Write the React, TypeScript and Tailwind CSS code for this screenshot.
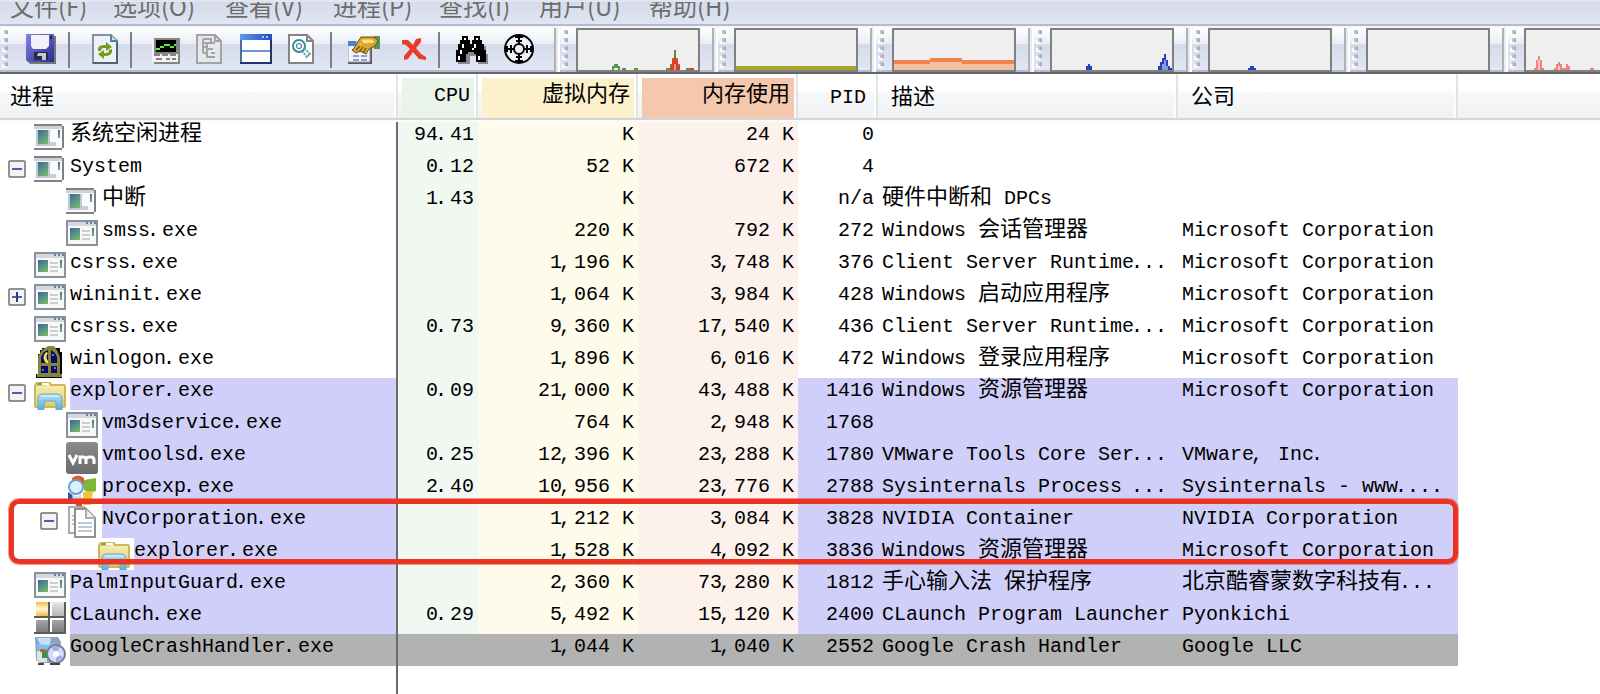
import React from "react";

type IconKind =
  | "sys" | "app" | "winlogon" | "folder" | "vm" | "procexp" | "docs" | "claunch" | "installer";

interface Proc {
  name: string;
  depth: 0 | 1 | 2;
  icon: IconKind;
  toggle?: "+" | "-";
  cpu?: string;
  virt: string;
  mem: string;
  pid: string;
  desc?: string;
  company?: string;
  tone?: "own" | "gone";
}

const MS = "Microsoft Corporation";

const PROCS: Proc[] = [
  { name: "系统空闲进程", depth: 0, icon: "sys", cpu: "94.41", virt: "K", mem: "24 K", pid: "0" },
  { name: "System", depth: 0, icon: "sys", toggle: "-", cpu: "0.12", virt: "52 K", mem: "672 K", pid: "4" },
  { name: "中断", depth: 1, icon: "sys", cpu: "1.43", virt: "K", mem: "K", pid: "n/a", desc: "硬件中断和 DPCs" },
  { name: "smss.exe", depth: 1, icon: "app", virt: "220 K", mem: "792 K", pid: "272", desc: "Windows 会话管理器", company: MS },
  { name: "csrss.exe", depth: 0, icon: "app", virt: "1,196 K", mem: "3,748 K", pid: "376", desc: "Client Server Runtime...", company: MS },
  { name: "wininit.exe", depth: 0, icon: "app", toggle: "+", virt: "1,064 K", mem: "3,984 K", pid: "428", desc: "Windows 启动应用程序", company: MS },
  { name: "csrss.exe", depth: 0, icon: "app", cpu: "0.73", virt: "9,360 K", mem: "17,540 K", pid: "436", desc: "Client Server Runtime...", company: MS },
  { name: "winlogon.exe", depth: 0, icon: "winlogon", virt: "1,896 K", mem: "6,016 K", pid: "472", desc: "Windows 登录应用程序", company: MS },
  { name: "explorer.exe", depth: 0, icon: "folder", toggle: "-", cpu: "0.09", virt: "21,000 K", mem: "43,488 K", pid: "1416", desc: "Windows 资源管理器", company: MS, tone: "own" },
  { name: "vm3dservice.exe", depth: 1, icon: "app", virt: "764 K", mem: "2,948 K", pid: "1768", tone: "own" },
  { name: "vmtoolsd.exe", depth: 1, icon: "vm", cpu: "0.25", virt: "12,396 K", mem: "23,288 K", pid: "1780", desc: "VMware Tools Core Ser...", company: "VMware, Inc.", tone: "own" },
  { name: "procexp.exe", depth: 1, icon: "procexp", cpu: "2.40", virt: "10,956 K", mem: "23,776 K", pid: "2788", desc: "Sysinternals Process ...", company: "Sysinternals - www....", tone: "own" },
  { name: "NvCorporation.exe", depth: 1, icon: "docs", toggle: "-", virt: "1,212 K", mem: "3,084 K", pid: "3828", desc: "NVIDIA Container", company: "NVIDIA Corporation", tone: "own" },
  { name: "explorer.exe", depth: 2, icon: "folder", virt: "1,528 K", mem: "4,092 K", pid: "3836", desc: "Windows 资源管理器", company: MS, tone: "own" },
  { name: "PalmInputGuard.exe", depth: 0, icon: "app", virt: "2,360 K", mem: "73,280 K", pid: "1812", desc: "手心输入法 保护程序", company: "北京酷睿蒙数字科技有...", tone: "own" },
  { name: "CLaunch.exe", depth: 0, icon: "claunch", cpu: "0.29", virt: "5,492 K", mem: "15,120 K", pid: "2400", desc: "CLaunch Program Launcher", company: "Pyonkichi", tone: "own" },
  { name: "GoogleCrashHandler.exe", depth: 0, icon: "installer", virt: "1,044 K", mem: "1,040 K", pid: "2552", desc: "Google Crash Handler", company: "Google LLC", tone: "gone" },
];

const MENUS = [
  { label: "文件(F)", width: "w-[103px]" },
  { label: "选项(O)", width: "w-[112px]" },
  { label: "查看(V)", width: "w-[108px]" },
  { label: "进程(P)", width: "w-[106px]" },
  { label: "查找(I)", width: "w-[100px]" },
  { label: "用户(U)", width: "w-[110px]" },
  { label: "帮助(H)", width: "w-[110px]" },
];

/* Full-width characters are set slightly larger; punctuation hugs the left of its cell. */
function Mono({ text }: { text: string }) {
  const parts = text.match(/[\u4e00-\u9fff]+|[.,]+|[^\u4e00-\u9fff.,]+/g) ?? [];
  return (
    <>
      {parts.map((p, i) =>
        /[\u4e00-\u9fff]/.test(p) ? (
          <span key={i} className="text-[22px] leading-[0]">{p}</span>
        ) : /[.,]/.test(p) ? (
          <span key={i} className="relative -left-[3px]">{p}</span>
        ) : (
          <span key={i}>{p}</span>
        )
      )}
    </>
  );
}

function ProcIcon({ kind }: { kind: IconKind }) {
  const body = {
    sys: (
      <g>
        <path d="M0 2H30V28H0z" fill="#fafafa" />
        <path d="M0 4H28V7H0z" fill="#d0d1d6" />
        <path d="M0 2H28V4H0zM0 26H28V28H0zM28 4H30V26H28z" fill="#808086" />
        <path d="M2 8H16V24H2z" fill="#c3c4d6" />
        <path d="M4 8H14V22H4z" fill="url(#scr)" />
        <path d="M24 8H26V16H24z" fill="url(#scr)" />
        <path d="M16 20H22V24H16z" fill="#cfcfcf" />
      </g>
    ),
    app: (
      <g>
        <path d="M0 2H32V28H0z" fill="#8b9297" />
        <path d="M2 4H30V26H2z" fill="#f8f8f8" />
        <path d="M2 4H30V8H2z" fill="#d2dae1" />
        <path d="M20 4h2v2h-2zM24 4h2v2h-2zM28 4h2v2h-2z" fill="#6a7da0" />
        <path d="M4 10H14V22H4z" fill="url(#scr)" />
        <path d="M26 10H28V18H26z" fill="url(#scr)" />
        <path d="M16 12h8v2h-8zM16 16h8v2h-8zM16 20h8v2h-8z" fill="#cdcdcd" />
      </g>
    ),
    winlogon: (
      <g>
        <path d="M8 2H26V6H28V28H28V32H2V28H4V8H6V4H8z" fill="#060606" />
        <path d="M4 28V10L8 4L14 0H20L24 6L26 12V28H28V31H3V28z" fill="#85843a" />
        <path d="M7 11L10 6L14 4V17H7zM17 4L21 7L23 11V17H17zM7 20H14V27H7zM17 20H23V27H17z" fill="#060a70" />
        <path d="M12 6Q7 12 12 17H14V15Q11 11 14 7z" fill="#f3e83d" />
        <path d="M14 3H17V29H14zM4 17H26V20H4z" fill="#85843a" />
        <path d="M18 8h2v2h-2zM20 21h2v2h-2zM8 23h2v2h-2z" fill="#6e75cb" />
      </g>
    ),
    folder: (
      <g>
        <path d="M1 6Q1 4 3 4H16L18 6H30Q32 6 32 9V28Q32 30 30 30H2Q0 30 0 27V8z" fill="#cdb757" />
        <path d="M2 8L16 7L17 8H30V28H2z" fill="url(#fold)" />
        <path d="M8 5H15V7H8z" fill="#fff" /><path d="M4 5H8V7H4z" fill="#55b940" />
        <path d="M4 32V21Q4 16 9 16H23Q28 16 28 21V32H22V25Q22 23 20 23H12Q10 23 10 25V32z" fill="url(#blue)" stroke="#6aa6c9" strokeWidth="1" />
        <path d="M7 18H25" stroke="#cdeffc" strokeWidth="1.6" />
      </g>
    ),
    vm: (
      <g>
        <rect x="0" y="0" width="32" height="32" rx="3" fill="url(#vmg)" />
        <path d="M3 13L7 21L11 13M14 22V15H17Q20 15 20 18V22M20 18Q20 15 23 15H25Q28 15 28 18V22" fill="none" stroke="#fff" strokeWidth="3" />
      </g>
    ),
    procexp: (
      <g>
        <path d="M6 4Q12-1 18 4V11H6z" fill="#e4592c" />
        <path d="M18 6L30 4V17Q23 20 18 16z" fill="#7fb637" />
        <path d="M17 18L27 17L25 31H17z" fill="#f3c437" />
        <path d="M2 18L8 22L9 30H2z" fill="#2859a8" />
        <circle cx="10" cy="13" r="7" fill="#dcf0fb" stroke="#6e9fc7" strokeWidth="2" />
        <path d="M6 21Q12 24 15 20L16 31H8z" fill="#c9dcea" /><path d="M10 28L16 24V32H10z" fill="#d84d27" />
      </g>
    ),
    docs: (
      <g strokeWidth="2">
        <path d="M3 1H18L21 4V27H3z" fill="#fafafa" stroke="#ababab" />
        <path d="M6 10h3M6 14h3M6 18h3" stroke="#b9c8dc" />
        <path d="M9 3H20L29 12V31H9z" fill="#fff" stroke="#909090" />
        <path d="M20 3V12H29" fill="#eee" stroke="#ababab" />
        <path d="M12 17H26M12 21H26M12 25H26" stroke="#bccadb" />
      </g>
    ),
    claunch: (
      <g>
        <path d="M2 0H14V14H2z" fill="url(#gold)" />
        <path d="M18 0H30V14H18zM2 18H14V31H2zM18 18H30V31H18z" fill="url(#gry)" />
        <path d="M14 0h2v32h-2zM0 14h32v2H0zM30 0h2v32h-2zM0 30h32v2H0z" fill="#5d5d5d" />
      </g>
    ),
    installer: (
      <g>
        <path d="M1 3H24L27 8L25 29H6L2 26z" fill="#8ea6b8" />
        <path d="M3 4H17L16 10L22 14H8z" fill="#c9ddff" />
        <path d="M2 10L14 11L22 8L18 16H5z" fill="#78c4ef" />
        <path d="M3 17H13V28H6L3 26z" fill="#dbe4e8" />
        <path d="M8 18L14 15V24H8z" fill="#2e9c36" /><path d="M6 15h5v3H6z" fill="#e65426" />
        <circle cx="22" cy="20" r="9" fill="#d8dafb" stroke="#77798f" strokeWidth="2" />
        <path d="M22 20L17 13Q22 10 26 13zM22 20L29 23Q26 28 22 28z" fill="#a5a8ef" />
        <circle cx="22" cy="20" r="3" fill="#fff" />
        <path d="M4 29h6v2H4zM16 29h10v2H16z" fill="#444" />
      </g>
    ),
  }[kind];
  return (
    <svg className="h-8 w-8 shrink-0" viewBox="0 0 32 32" shapeRendering={kind === "sys" || kind === "app" || kind === "claunch" ? "crispEdges" : "auto"}>
      {body}
    </svg>
  );
}

function Gradients() {
  return (
    <svg className="absolute h-0 w-0" aria-hidden="true">
      <defs>
        <linearGradient id="scr" x1="0" y1="0" x2=".6" y2="1"><stop stopColor="#3d639f" /><stop offset="1" stopColor="#71b36f" /></linearGradient>
        <linearGradient id="fold" x1="0" y1="0" x2="0" y2="1"><stop stopColor="#f8efb4" /><stop offset="1" stopColor="#dfc96f" /></linearGradient>
        <linearGradient id="blue" x1="0" y1="0" x2="0" y2="1"><stop stopColor="#b5e2f6" /><stop offset="1" stopColor="#59abd7" /></linearGradient>
        <linearGradient id="vmg" x1="0" y1="0" x2="0" y2="1"><stop stopColor="#8b8b8b" /><stop offset="1" stopColor="#6b6b6d" /></linearGradient>
        <linearGradient id="gold" x1="0" y1="0" x2="0" y2="1"><stop stopColor="#f3bd43" /><stop offset=".5" stopColor="#fff6dd" /><stop offset="1" stopColor="#f3bd43" /></linearGradient>
        <linearGradient id="gry" x1="0" y1="0" x2="0" y2="1"><stop stopColor="#e8e8e8" /><stop offset="1" stopColor="#777" /></linearGradient>
        <linearGradient id="sv" x1="0" y1="0" x2="1" y2="1"><stop stopColor="#8284e6" /><stop offset="1" stopColor="#2a2c8e" /></linearGradient>
        <linearGradient id="title" x1="0" y1="0" x2="1" y2="0"><stop stopColor="#5f98ee" /><stop offset="1" stopColor="#1c4ec4" /></linearGradient>
      </defs>
    </svg>
  );
}

function Toggle({ sign }: { sign: "+" | "-" }) {
  return (
    <svg className="mt-1.5 ml-2 h-[18px] w-[18px] shrink-0" viewBox="0 0 18 18" shapeRendering="crispEdges">
      <path d="M1 0H17V1H18V17H17V18H1V17H0V1H1z" fill="#919191" />
      <path d="M2 2H16V16H2z" fill="#f4f4f4" />
      <path d="M4 8H14V10H4z" fill="#4a62ab" />
      {sign === "+" && <path d="M8 4H10V14H8z" fill="#2c3f86" />}
    </svg>
  );
}

const TOOL_ICONS: Record<string, React.ReactNode> = {
  save: (
    <g>
      <path d="M2 2H30V30H4L2 28z" fill="#77777d" />
      <path d="M0 0H28V28H2L0 26z" fill="url(#sv)" />
      <path d="M5 1H23V12L20 15H7L5 12z" fill="#f2f2f6" />
      <path d="M24 2h2v3h-2z" fill="#1c1e58" />
      <path d="M8 18H22V26H8z" fill="#292b45" /><path d="M12 19H20V26H16V22H11z" fill="#c5c7ce" />
    </g>
  ),
  refresh: (
    <g>
      <path d="M1 1H19L25 7V29H1z" fill="#eef1f6" stroke="#8093a0" strokeWidth="2" />
      <path d="M25 7V29H1" fill="none" stroke="#4d6576" strokeWidth="2" /><path d="M19 1V7H25" fill="#cddce9" stroke="#4d86a5" strokeWidth="2" />
      <path d="M6 17Q5 11 12 11H14V8L20 13L14 17V14H12Q9 14 9 17zM20 15Q21 22 14 22H12V25L6 20L12 16V19H14Q17 19 17 16z" fill="#769b22" />
    </g>
  ),
  graph: (
    <g shapeRendering="crispEdges">
      <path d="M2 2H28V28H2z" fill="#858585" /><path d="M0 0H26V26H0z" fill="#f4f4f4" />
      <path d="M2 2H26V18H2z" fill="#858585" /><path d="M4 4H24V16H4z" fill="#000" />
      <path d="M4 12H8V10H12V8H18V10H22V8H24V10H22V12H18V10H12V12H8V14H4z" fill="#65e63f" />
      <path d="M2 18h6v2H2zM10 18h6v2h-6zM18 18h6v2h-6zM4 22h6v2H4zM14 22h4v2h-4zM20 22h4v2h-4z" fill="#858585" />
    </g>
  ),
  tree: (
    <g fill="none" stroke="#a4a4a4" strokeWidth="2" shapeRendering="crispEdges">
      <path d="M1 1H19L25 7V29H1z" fill="#e5e7ee" /><path d="M19 1V7H25" />
      <path d="M7 5V19M7 5H15V9M7 9H11M11 9H19M7 13H11M11 9V23H19M11 15H17M7 19H11M15 19H19" />
    </g>
  ),
  window: (
    <g shapeRendering="crispEdges">
      <path d="M0 0H32V30H0z" fill="url(#title)" /><path d="M2 6H30V28H2z" fill="#fff" />
      <path d="M0 6h2v24H0z" fill="#4f6d9a" /><path d="M0 28H32V30H0zM30 6H32V30H30z" fill="#23366a" />
      <path d="M2 16H30V18H2z" fill="#6b98cf" /><path d="M22 2h2v2h-2zM26 2h2v2h-2z" fill="#a9c8ff" />
    </g>
  ),
  find: (
    <g fill="none" strokeWidth="2">
      <path d="M1 1H19L25 7V29H1z" fill="#fff" stroke="#858585" /><path d="M19 1V7H25" stroke="#858585" />
      <circle cx="11" cy="12" r="6" stroke="#378f98" /><circle cx="11" cy="12" r="2.5" stroke="#378f98" strokeWidth="1.2" />
      <path d="M14 17L19 23L22 20L16 14" stroke="#5aa1aa" strokeDasharray="2 1" />
    </g>
  ),
  props: (
    <g>
      <path d="M0 8H24V28H0z" fill="#555b63" /><path d="M0 6H22V26H0z" fill="#f1f3f8" stroke="#99a" />
      <path d="M0 5H8V10H0z" fill="#4b82d9" />
      <path d="M26 0h6v13h-6z" fill="#4c9a55" />
      <path d="M6 12L13 1H26L30 5L27 10L21 13L18 18L12 15L8 17L4 14z" fill="#d9a530" stroke="#6b4d15" strokeWidth="1" />
      <path d="M14 4H24L26 6L16 7zM11 10L14 7" fill="#ffe17c" stroke="#ffe17c" />
      <path d="M8 14L12 10M11 16L15 11M15 17L18 12" stroke="#6b4d15" strokeWidth="1.2" />
      <path d="M5 20h6M13 20h6M5 24h6M13 24h6" stroke="#9ba0c8" strokeWidth="2" />
    </g>
  ),
  kill: (
    <path d="M0 2H6L11 7L14 1L19 0V4L14 10L19 16L24 19V22L17 21L11 14L6 21L2 22V18L8 11L4 7L0 6z" fill="#ea3b27" />
  ),
  binoc: (
    <g shapeRendering="crispEdges">
      <path d="M8 4H14V8H20V4H26V10H30V18H32V28H22V20H14V28H2V24z" fill="#8a8a8a" />
      <path d="M6 0H12V4H14V8H16V4H18V0H24V4H26V8H28V14H30V26H20V18H18V16H12V18H10V26H0V14H2V8H4V4H6z" fill="#000" />
      <path d="M8 2h2v2H8zM20 2h2v2h-2zM6 8h2v4H6zM4 14h2v4H4zM2 20h2v4H2zM18 8h2v4h-2zM16 12h2v2h-2zM22 20h2v4h-2z" fill="#fff" />
    </g>
  ),
  target: (
    <g fill="none" stroke="#000" strokeWidth="2">
      <circle cx="15" cy="15" r="14" fill="#eef0f7" /><circle cx="15" cy="15" r="5" />
      <path d="M15 1V11M15 19V29M1 15H11M19 15H29M11 3H19M11 27H19M12 7H18M12 23H18M7 11V19M23 11V19M3 12V18M27 12V18" />
    </g>
  ),
};

function Tool({ name, className }: { name: string; className: string }) {
  return (
    <svg className={`h-8 w-8 shrink-0 ${className}`} viewBox="0 0 32 32">
      {TOOL_ICONS[name]}
    </svg>
  );
}

function Sep({ className }: { className: string }) {
  return <div className={`mt-1 h-9 w-[2px] shrink-0 bg-[#808080] ${className}`} />;
}

function Gripper({ className }: { className: string }) {
  return (
    <svg className={`h-11 w-[6px] shrink-0 ${className}`} viewBox="0 0 6 44" shapeRendering="crispEdges">
      {[2, 10, 18, 26, 34, 42].map((y) => (
        <g key={y}>
          <path d={`M0 ${y + 2}h4v4h-4z`} fill="#fbfbfd" />
          <path d={`M2 ${y}h4v4h-4z`} fill="#c3c5ca" />
          <path d={`M4 ${y + 1}h2v3h-2z`} fill="#a9abb2" />
        </g>
      ))}
    </svg>
  );
}

/* Drawing area of each history graph is 120 by 40. */
const GRAPHS: React.ReactNode[] = [
  <g>
    <path d="M34 40V36h2v-2h4v2h2v4h-2v-2h-4v2zM44 38h4v2h-4zM56 38h4v2h-4zM88 38h4v-4h2v-6h2V20h2v8h2v6h2v6H88zM108 38h4v2h-4z" fill="#57934b" />
    <path d="M92 40V36h2v-6h2v-4h2v4h2v6h2v4zM112 38h4v2h-4z" fill="#e8392b" /><path d="M96 34h2v6h-2z" fill="#f0988a" />
  </g>,
  <path d="M0 36H120V40H0z" fill="#a8a62d" />,
  <g>
    <path d="M0 30H36V28H68V30H120V40H0z" fill="#f5bfa3" />
    <path d="M0 30H36V28H68V30H120V34H68V32H36V34H0z" fill="#ef854d" />
  </g>,
  <g>
    <path d="M34 40V36h2v-2h2v2h2v4zM106 40V36h2v-4h2v-4h2v-4h2v6h2v6h2v2h2v2z" fill="#2440c4" />
    <path d="M110 34h2v-4h2v6h2v4h-6z" fill="#8c98dd" />
  </g>,
  <path d="M38 38h2v-2h4v2h2v2h-8z" fill="#2440c4" />,
  null,
  <g>
    <path d="M8 38h2v-8h2v-4h2v4h2v8h2v2H8zM28 38h2v-4h2v-2h2v2h2v4h2v2H28zM38 38h2v-4h2v2h2v4h-6zM64 38h4v2h-4z" fill="#ef8481" />
    <path d="M12 30h2v10h-2zM32 36h2v4h-2z" fill="#f7c5c4" />
  </g>,
];

function GraphBand({ children }: { children?: React.ReactNode }) {
  return (
    <div className="flex w-[158px] shrink-0">
      <div className="w-[2px] bg-[#b1b1b3]" />
      <div className="w-[2px] bg-[#e9ebf3]" />
      <div className="w-[2px] bg-white" />
      <Gripper className="ml-[2px]" />
      <svg className="ml-[8px] h-11 w-[124px] shrink-0 border-2 border-[#808080] bg-[#efefef]" viewBox="0 0 120 40" shapeRendering="crispEdges">
        {children}
      </svg>
    </div>
  );
}

function HeadCell({ label, width, block, text }: { label: string; width: string; block: string; text: string }) {
  return (
    <div className={`flex h-11 shrink-0 pl-1 ${width}`}>
      <div className={`mt-1 grow leading-[26px] ${block} ${text}`}>
        <Mono text={label} />
      </div>
      <div className="w-[2px] bg-white/80" />
      <div className="w-[2px] bg-[#e2e3e5]" />
    </div>
  );
}

const INDENT = { 0: "w-[34px]", 1: "w-[66px]", 2: "w-[98px]" };
const TOGGLE_PAD = { 0: "", 1: "pl-8", 2: "pl-16" };
const TONE = { own: "bg-[#cfcff9]", gone: "bg-[#b2b2b2]" };

function Row({ p }: { p: Proc }) {
  const tone = p.tone ? TONE[p.tone] : "";
  const gone = p.tone === "gone";
  return (
    <div className="flex h-8 w-[1458px] leading-[26px]">
      <div className="flex w-[396px] shrink-0">
        <div className={`flex shrink-0 ${INDENT[p.depth]} ${TOGGLE_PAD[p.depth]}`}>
          {p.toggle && <Toggle sign={p.toggle} />}
        </div>
        <div className="w-9 shrink-0">
          <ProcIcon kind={p.icon} />
        </div>
        <div className={`grow ${tone}`}><Mono text={p.name} /></div>
      </div>
      <div className="w-[2px] shrink-0 bg-[#6b6b6b]" />
      <div className={`w-[80px] shrink-0 pr-1 text-right ${gone ? tone : "bg-[#f1f8f1]"}`}><Mono text={p.cpu ?? ""} /></div>
      <div className={`w-[160px] shrink-0 pr-1 text-right ${gone ? tone : "bg-[#fefbea]"}`}><Mono text={p.virt} /></div>
      <div className={`w-[160px] shrink-0 pr-1 text-right ${gone ? tone : "bg-[#fcf1eb]"}`}><Mono text={p.mem} /></div>
      <div className={`w-[80px] shrink-0 pr-1 text-right ${tone}`}><Mono text={p.pid} /></div>
      <div className={`w-[300px] shrink-0 pl-1 ${tone}`}><Mono text={p.desc ?? ""} /></div>
      <div className={`w-[280px] shrink-0 pl-1 ${tone}`}><Mono text={p.company ?? ""} /></div>
    </div>
  );
}

export default function App() {
  return (
    <div className="relative flex h-[694px] w-[1600px] flex-col overflow-hidden bg-white font-['Liberation_Mono','Noto_Sans_CJK_SC',monospace] text-[20px] whitespace-pre text-black">
      <Gradients />
      <nav className="flex h-6 shrink-0 overflow-hidden border-t-2 border-[#e2e6f3] bg-linear-to-b from-[#d5dbea] to-[#e0e5f3] pl-[10px] font-['Noto_Sans_CJK_SC',sans-serif] text-[24px] leading-[8px] text-[#6d6d6d]">
        {MENUS.map((m) => (
          <div key={m.label} className={`shrink-0 ${m.width}`}>{m.label}</div>
        ))}
      </nav>
      <div className="h-[2px] shrink-0 bg-[#b5bbcc]" />
      <div className="h-[2px] shrink-0 bg-[#f5f6fa]" />
      <div className="flex h-11 shrink-0 overflow-hidden bg-[linear-gradient(to_bottom,#ffffff_0px,#e8ecf5_16px,#d4daea_16px,#e3e7f5_42px,#b4bacc_42px)]">
        <div className="flex w-[554px] shrink-0">
          <Gripper className="ml-[2px]" />
          <Tool name="save" className="mt-1.5 ml-[18px]" />
          <Sep className="ml-[10px]" />
          <Tool name="refresh" className="mt-1.5 ml-[22px]" />
          <Sep className="ml-[6px]" />
          <Tool name="graph" className="mt-2 ml-[20px]" />
          <Tool name="tree" className="mt-1.5 ml-[12px]" />
          <Tool name="window" className="mt-1.5 ml-[12px]" />
          <Tool name="find" className="mt-1.5 ml-[16px]" />
          <Sep className="ml-[10px]" />
          <Tool name="props" className="mt-2 ml-[16px]" />
          <Tool name="kill" className="mt-2.5 ml-[22px]" />
          <Sep className="ml-[4px]" />
          <Tool name="binoc" className="mt-2 ml-[16px]" />
          <Tool name="target" className="mt-1.5 ml-[16px]" />
        </div>
        {GRAPHS.map((g, i) => (
          <GraphBand key={i}>{g}</GraphBand>
        ))}
      </div>
      <div className="h-[2px] shrink-0 bg-[#65666a]" />
      <div className="flex h-[46px] shrink-0 border-b-2 border-[#d5d5d5] bg-[linear-gradient(to_bottom,#ffffff_18px,#f7f8fa_18px,#f0f1f3_44px)]">
        <HeadCell label="进程" width="w-[398px]" block="" text="pt-[8px] pl-[6px]" />
        <HeadCell label="CPU" width="w-[80px]" block="bg-[#e9f3ea]" text="pr-1 pt-[5px] text-right" />
        <HeadCell label="虚拟内存" width="w-[160px]" block="bg-[#fcf1cb]" text="pr-1 pt-[5px] text-right" />
        <HeadCell label="内存使用" width="w-[160px]" block="bg-[#f5c7ad]" text="pr-1 pt-[5px] text-right" />
        <HeadCell label="PID" width="w-[80px]" block="" text="pr-2 pt-[7px] text-right" />
        <HeadCell label="描述" width="w-[300px]" block="" text="pt-[8px] pl-[9px]" />
        <HeadCell label="公司" width="w-[280px]" block="" text="pt-[8px] pl-[9px]" />
      </div>
      <div className="h-[2px] shrink-0 bg-[#fbfbfb]" />
      <main className="flex shrink-0 flex-col">
        {PROCS.map((p, i) => (
          <Row key={i} p={p} />
        ))}
      </main>
      <div className="ml-[396px] w-[2px] grow bg-[#6b6b6b]" />
      <div className="absolute top-[499px] left-[9px] h-[65px] w-[1449px] rounded-[10px] border-[5px] border-[#eb3323] shadow-[0_0_0_1px_#eb332380]" />
    </div>
  );
}
